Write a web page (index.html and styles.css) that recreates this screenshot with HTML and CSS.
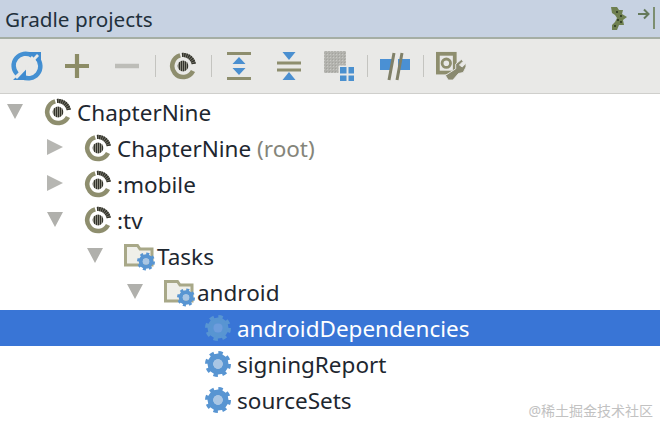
FILE: index.html
```html
<!DOCTYPE html>
<html lang="en">
<head>
<meta charset="utf-8">
<title>Gradle projects</title>
<link rel="stylesheet" href="styles.css">
</head>
<body>
<svg class="defs" aria-hidden="true">
  <defs>
    <pattern id="stripes" width="2" height="2" patternUnits="userSpaceOnUse">
      <rect width="1.2" height="2" fill="#33332c"/>
      <rect x="1.2" width="0.8" height="2" fill="#77776a"/>
    </pattern>
    <pattern id="dots" width="3" height="3" patternUnits="userSpaceOnUse">
      <rect width="3" height="3" fill="#b3b3ae"/>
      <rect width="1" height="1" fill="#c8c8c4"/>
      <rect x="2" y="2" width="1" height="1" fill="#a3a39e"/>
    </pattern>
    <symbol id="gradle" viewBox="0 0 28 28">
      <path d="M24 19A11 11 0 1 1 11.200 3.400" fill="none" stroke="#8e8e6e" stroke-width="4.600"/>
      <path d="M13 3A11 11 0 0 1 24.800 12" fill="none" stroke="#85857a" stroke-width="4.200"/>
      <path d="M13 3A11 11 0 0 1 24.800 12" fill="none" stroke="#33332c" stroke-width="4.200" stroke-dasharray="1.400 .7"/>
      <circle cx="14" cy="14" r="5.400" fill="url(#stripes)"/>
    </symbol>
    <symbol id="gear" viewBox="0 0 26 26">
      <circle class="gear-body" cx="13" cy="13" r="7.500" fill="none" stroke="#5895d2" stroke-width="6"/>
      <circle class="gear-teeth" cx="13" cy="13" r="11" fill="none" stroke="#5895d2" stroke-width="4" stroke-dasharray="4.300 4.340"/>
      <circle class="gear-hole" cx="13" cy="13" r="4.800"/>
    </symbol>
    <symbol id="folder" viewBox="0 0 31 30">
      <path d="M1.500 4.500H13.500L16 8H28V24H1.500Z" fill="#efefe9" stroke="#a8a888" stroke-width="3"/>
      <use href="#gear" x="13" y="11" width="18" height="19"/>
    </symbol>
  </defs>
</svg>

<main class="panel">
  <header class="title-bar">
    <h1 class="title">Gradle projects</h1>
    <div class="title-actions">
      <svg class="hide-gear" viewBox="0 0 16 23"><path d="M0 0H6L8 3 12 3 11 7 16 10 12 13 13 18 8 18 6 23H1V18L4 15 6 11 4 8 1 6Z" fill="#6f8050"/><g fill="#1f2a18"><circle cx="6" cy="5" r=".9"/><circle cx="10" cy="9" r=".9"/><circle cx="7" cy="13" r=".9"/><circle cx="4" cy="19" r=".9"/><circle cx="10" cy="15" r=".9"/></g></svg>
      <svg class="hide-pin" viewBox="0 0 17 22"><path d="M0 7H10M6 2.500L10.500 7 6 11.500" fill="none" stroke="#657a5c" stroke-width="2"/><rect x="15" width="2" height="22" fill="#7c8e70"/></svg>
    </div>
  </header>

  <div class="toolbar">
    <button class="tool"><svg viewBox="0 0 28 28"><path d="M4 22A12 12 0 0 1 19 3.500M24 6A12 12 0 0 1 9 24.500" fill="none" stroke="#4490d2" stroke-width="4.500"/><path d="M15 0H28V13ZM0 28H13V15Z" fill="#3f8bd0"/><path d="M3 26L25 3" stroke="#e9e9e7" stroke-width="2.800"/></svg></button>
    <button class="tool"><svg viewBox="0 0 28 28"><path d="M2 14H26M14 2V26" stroke="#8c8c66" stroke-width="4.200"/></svg></button>
    <button class="tool"><svg viewBox="0 0 28 28"><path d="M2 14H26" stroke="#bdbdb8" stroke-width="4.500"/></svg></button>
    <span class="sep"></span>
    <button class="tool"><svg viewBox="0 0 28 28"><use href="#gradle"/></svg></button>
    <span class="sep"></span>
    <button class="tool"><svg viewBox="0 0 28 28"><path d="M2 1.500H26M2 26.500H26" stroke="#8e8e6e" stroke-width="3"/><path d="M14 5L20.500 12H7.500ZM14 23L7.500 16H20.500Z" fill="#4a8fd0"/></svg></button>
    <button class="tool"><svg viewBox="0 0 28 28"><path d="M2 11H26M2 18H26" stroke="#8e8e6e" stroke-width="3"/><path d="M7.500 0H20.500L14 8ZM14 20L20.500 28H7.500Z" fill="#4a8fd0"/></svg></button>
    <button class="tool"><svg class="wide" viewBox="0 0 30 30"><rect width="22" height="22" fill="url(#dots)"/><path d="M14.500 14.500H30V30H14.500Z" fill="#e9e9e7"/><path d="M16 16H22.500V22.500H16ZM24.500 16H30V22.500H24.500ZM16 24.500H22.500V30H16ZM24.500 24.500H30V30H24.500Z" fill="#4a90cf"/></svg></button>
    <span class="sep"></span>
    <button class="tool"><svg class="wide" viewBox="0 0 30 30"><path d="M0 8H12V19H0ZM18 8H30V19H18Z" fill="#4a90d4"/><path d="M9 29L14 2M17 29L22 2" stroke="#808068" stroke-width="3"/></svg></button>
    <span class="sep"></span>
    <button class="tool"><svg class="wide" viewBox="0 0 32 30"><path d="M0 0H22V24H0Z" fill="#8e8e6e"/><rect x="4" y="4" width="14" height="16" fill="#e9e9e7"/><circle cx="11" cy="12" r="4.500" fill="none" stroke="#8e8e6e" stroke-width="3"/><path d="M27 8L21 13 21 18 10 25 13 30 18 30 24 23 29 22 32 16 32 12 28 16 25 14 29 10Z" fill="#8a8a70" stroke="#e9e9e7"/></svg></button>
  </div>

  <ul class="tree">
    <li class="row"><span class="arrow down"></span><svg class="icon"><use href="#gradle"/></svg><span class="label">ChapterNine</span></li>
    <li class="row l1"><span class="arrow right"></span><svg class="icon"><use href="#gradle"/></svg><span class="label">ChapterNine <span class="muted">(root)</span></span></li>
    <li class="row l1"><span class="arrow right"></span><svg class="icon"><use href="#gradle"/></svg><span class="label">:mobile</span></li>
    <li class="row l1"><span class="arrow down"></span><svg class="icon"><use href="#gradle"/></svg><span class="label">:tv</span></li>
    <li class="row l2"><span class="arrow down"></span><svg class="icon-folder"><use href="#folder"/></svg><span class="label">Tasks</span></li>
    <li class="row l3"><span class="arrow down"></span><svg class="icon-folder"><use href="#folder"/></svg><span class="label">android</span></li>
    <li class="row l4 selected"><span class="arrow none"></span><svg class="icon-gear"><use href="#gear"/></svg><span class="label">androidDependencies</span></li>
    <li class="row l4"><span class="arrow none"></span><svg class="icon-gear"><use href="#gear"/></svg><span class="label">signingReport</span></li>
    <li class="row l4"><span class="arrow none"></span><svg class="icon-gear"><use href="#gear"/></svg><span class="label">sourceSets</span></li>
  </ul>
</main>
<div class="watermark">@稀土掘金技术社区</div>
</body>
</html>
```
FILE: styles.css
```css
html, body {
  margin: 0;
  padding: 0;
  background: #ffffff;
}

body {
  width: 660px;
  height: 423px;
  overflow: hidden;
  position: relative;
  font-family: "Noto Sans", "Open Sans", sans-serif;
  color: #1e2730;
  --hole: #a9c6e4;
}

.defs {
  position: absolute;
  width: 0;
  height: 0;
}

.gear-hole {
  fill: var(--hole);
}

.title-bar {
  height: 37px;
  display: flex;
  align-items: center;
  justify-content: space-between;
  background: #c7d2e2;
  border-bottom: 2px solid #a5aea4;
  padding: 0 5px;
}

.title {
  margin: 0;
  font-size: 20.700px;
  font-weight: 400;
  color: #22303c;
}

.title-actions {
  display: flex;
  align-items: flex-start;
  gap: 11px;
  height: 23px;
}

.hide-gear {
  width: 16px;
  height: 23px;
}

.hide-pin {
  width: 17px;
  height: 22px;
}

.toolbar {
  height: 54px;
  display: flex;
  align-items: center;
  padding-left: 2px;
  background: #e9e9e7;
  border-bottom: 1px solid #cfcfcc;
}

.tool {
  width: 50px;
  height: 32px;
  padding: 0;
  border: 0;
  background: none;
  display: flex;
  align-items: center;
  justify-content: center;
}

.tool svg {
  width: 28px;
  height: 28px;
  overflow: visible;
}

.tool svg.wide {
  width: 30px;
  height: 30px;
}

.sep {
  width: 6px;
  height: 22px;
  display: flex;
  justify-content: center;
}

.sep::before {
  content: "";
  width: 1px;
  background: #c4c4c0;
}

.tree {
  list-style: none;
  margin: 0;
  padding: 0;
}

.row {
  height: 36px;
  display: flex;
  align-items: center;
  padding-left: 7px;
  font-size: 22.500px;
  white-space: nowrap;
}

.label {
  padding-top: 1px;
}

.l1 { padding-left: 47px; }
.l2 { padding-left: 87px; }
.l3 { padding-left: 127px; }
.l4 { padding-left: 167px; }

.selected {
  background: #3975d6;
  color: #ffffff;
  --hole: #6d9ddc;
}

.arrow {
  width: 37px;
  height: 16px;
  flex: none;
}

.arrow.none {
  width: 38px;
}

.arrow.down::before,
.arrow.right::before {
  content: "";
  display: block;
  width: 0;
  height: 0;
}

.arrow.down::before {
  border-left: 8.500px solid transparent;
  border-right: 8.500px solid transparent;
  border-top: 15px solid #b0b0ac;
}

.arrow.right::before {
  border-top: 8.500px solid transparent;
  border-bottom: 8.500px solid transparent;
  border-left: 16px solid #b6b6b2;
  margin-top: -1px;
}

.icon {
  width: 28px;
  height: 28px;
  margin-right: 5px;
  flex: none;
}

.icon-folder {
  width: 31px;
  height: 30px;
  margin-right: 2px;
  flex: none;
}

.icon-gear {
  width: 26px;
  height: 26px;
  margin-right: 6px;
  flex: none;
}

.muted {
  color: #85857a;
}

.watermark {
  position: absolute;
  right: 7px;
  bottom: 3px;
  font-family: "Noto Sans", "Noto Sans CJK SC", sans-serif;
  font-size: 14px;
  color: #c2c2c2;
}
```
